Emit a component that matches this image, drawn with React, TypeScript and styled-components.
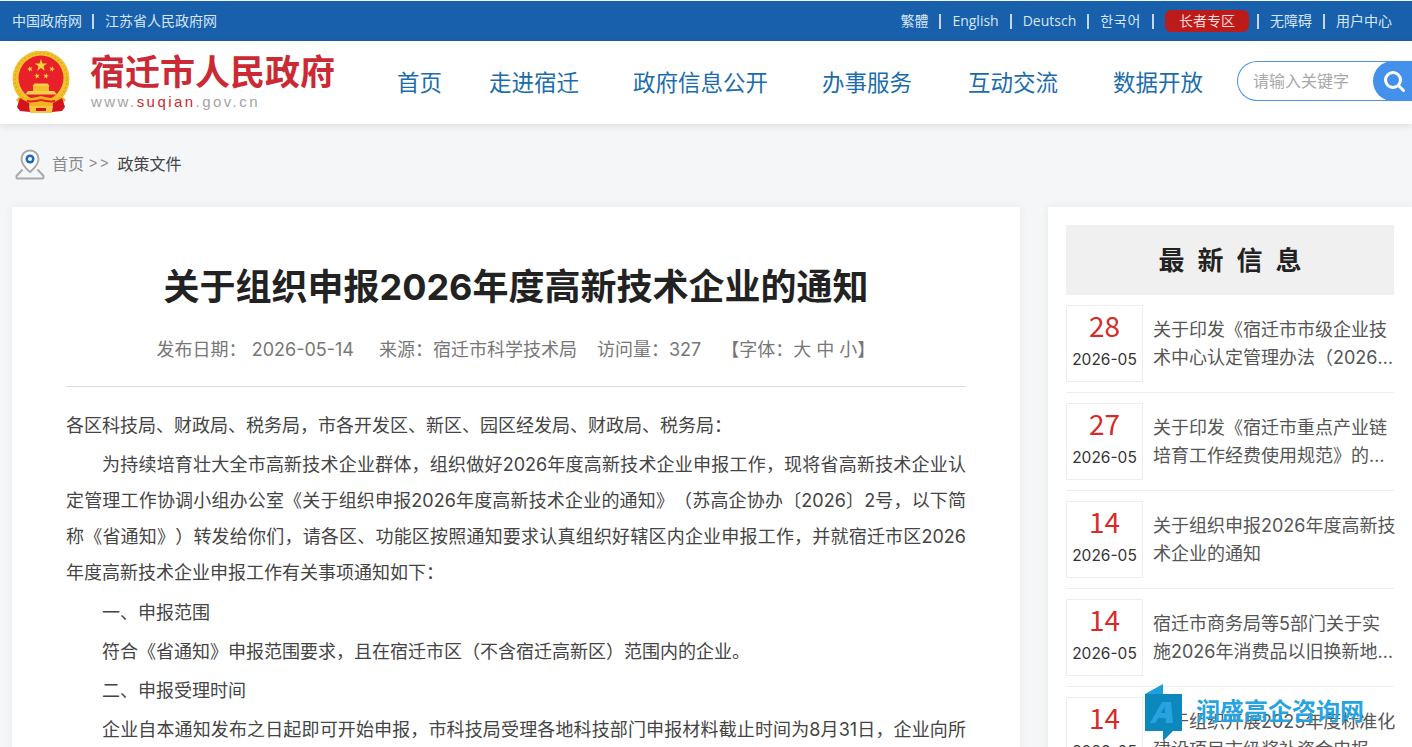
import React, { FC } from "react";
import styled, { createGlobalStyle } from "styled-components";

const FONT = `Inter, "Noto Sans CJK SC", "Noto Sans", sans-serif`;
const CJK = `"Noto Sans CJK SC", "Noto Sans", sans-serif`;

const GlobalStyle = createGlobalStyle`
  html, body {
    margin: 0;
    height: 100%;
    overflow: hidden;
    background: #f5f6f8;
    font-family: ${FONT};
    text-spacing-trim: space-all;
  }
  * { box-sizing: border-box; }
`;

const navItems = [
  { name: "首页", gap: 0 },
  { name: "走进宿迁", gap: 47 },
  { name: "政府信息公开", gap: 54 },
  { name: "办事服务", gap: 54 },
  { name: "互动交流", gap: 56 },
  { name: "数据开放", gap: 55 },
];

const news = [
  { day: "28", text: "关于印发《宿迁市市级企业技术中心认定管理办法（2026年修订）》的通知" },
  { day: "27", text: "关于印发《宿迁市重点产业链培育工作经费使用规范》的通知" },
  { day: "14", text: "关于组织申报2026年度高新技术企业的通知" },
  { day: "14", text: "宿迁市商务局等5部门关于实施2026年消费品以旧换新地方补贴政策的通知" },
  { day: "14", text: "关于组织开展2025年度标准化建设项目市级奖补资金申报工作的通知" },
];

const Page = styled.div`
  height: 747px;
  overflow: hidden;
  position: relative;
`;

const TopBar = styled.div`
  height: 40px;
  margin-top: 1px;
  padding: 0 20px 0 12px;
  background: #1860ab;
  color: #d6e6f5;
  display: flex;
  align-items: center;
  justify-content: space-between;
`;

const TopGroup = styled.div`
  display: flex;
  align-items: center;
`;

const TopLink = styled.span<{ $tracked?: boolean }>`
  font-family: "Open Sans", ${CJK};
  font-size: 14px;
  line-height: 20px;
  letter-spacing: ${(p) => (p.$tracked ? 0.7 : 0)}px;
  white-space: nowrap;
`;

const Sep = styled.i<{ $left?: boolean }>`
  width: 2px;
  height: 15px;
  margin: ${(p) => (p.$left ? "0 11px 0 10px" : "0 11px")};
  background: #c3d8ee;
`;

const Elder = styled.span`
  width: 84px;
  height: 22px;
  margin-right: -3px;
  border-radius: 6px;
  background: #bd1a1a;
  color: #f6dcdc;
  font-size: 14px;
  line-height: 22px;
  text-align: center;
`;

const Header = styled.header`
  position: relative;
  height: 83px;
  padding-bottom: 3px;
  background: #fff;
  box-shadow: 0 2px 8px rgba(0, 0, 0, 0.1);
  display: flex;
  align-items: center;
`;

const Brand = styled.div`
  width: 397px;
  padding-left: 12px;
  display: flex;
  align-items: center;
  gap: 20px;
  flex: none;
`;

const EmblemSvg = styled.svg`
  flex: none;
  margin-top: 3px;
`;

const BrandText = styled.div`
  display: flex;
  flex-direction: column;
  margin-top: -1px;
`;

const BrandName = styled.div`
  color: #cb2a34;
  font-size: 35px;
  line-height: 40px;
  font-weight: 700;
  white-space: nowrap;
`;

const BrandUrl = styled.div`
  color: #a3a3a3;
  font-family: "Liberation Sans", sans-serif;
  font-size: 15px;
  line-height: 16px;
  letter-spacing: 2.45px;
  margin: 2px 0 0 1px;

  span {
    color: #cb2a34;
  }
`;

const Nav = styled.nav`
  display: flex;
  margin-top: 4px;
`;

const NavItem = styled.a<{ $gap: number }>`
  margin-left: ${(p) => p.$gap}px;
  color: #1b6cab;
  font-size: 22.5px;
  line-height: 34px;
  white-space: nowrap;
`;

const Search = styled.div`
  margin-left: auto;
  width: 175px;
  height: 40px;
  border: 1px solid #4c93e6;
  border-right: 0;
  border-radius: 20px 0 0 20px;
  display: flex;
  align-items: center;
  padding: 0 0 2px 15px;
  position: relative;
  color: #a8a8a8;
  font-size: 16px;
  white-space: nowrap;
  flex: none;
`;

const SearchButton = styled.div`
  position: absolute;
  top: -1px;
  right: 0;
  width: 39px;
  height: 40px;
  padding-left: 2px;
  border-radius: 20px 0 0 20px;
  background: #4491eb;
  display: flex;
  align-items: center;
  justify-content: center;
`;

const Crumbs = styled.div`
  height: 83px;
  padding: 0 0 5px 15px;
  display: flex;
  align-items: center;
  font-size: 16px;
  color: #8a8a8a;
`;

const Pin = styled.svg`
  flex: none;
  margin: 3px 7px 0 0;
`;

const CrumbArrow = styled.span`
  margin: 0 6px 0 5px;
  font-family: "Liberation Sans", sans-serif;
  letter-spacing: 3px;
  font-size: 14px;
`;

const CrumbCurrent = styled.span`
  color: #444;
`;

const Columns = styled.div`
  display: flex;
  padding-left: 12px;
  gap: 28px;
`;

const Article = styled.main`
  flex: none;
  width: 1008px;
  height: 800px;
  padding: 0 54px;
  background: #fff;
  box-shadow: 0 0 10px rgba(0, 0, 0, 0.06);
`;

const Title = styled.h1`
  margin: 0;
  padding-top: 54px;
  color: #222;
  font-size: 36px;
  line-height: 52px;
  font-weight: 700;
  text-align: center;
  white-space: nowrap;
`;

const Meta = styled.div`
  margin-top: 22px;
  padding-bottom: 21px;
  border-bottom: 1px solid #ddd;
  display: flex;
  justify-content: center;
  color: #777;
  font-size: 18px;
  line-height: 30px;
  white-space: nowrap;
`;

const MetaItem = styled.span<{ $gap: number }>`
  margin-right: ${(p) => p.$gap}px;
`;

const Body = styled.div`
  margin-top: 21px;
`;

const Para = styled.p<{ $flush?: boolean }>`
  margin: 0 0 3.3px;
  color: #444;
  font-size: 18px;
  line-height: 36px;
  text-align: justify;
  text-indent: ${(p) => (p.$flush ? 0 : 36)}px;
`;

const Side = styled.aside`
  flex: none;
  width: 364px;
  padding: 18px 18px 0;
  background: #fff;
  box-shadow: 0 0 10px rgba(0, 0, 0, 0.06);
`;

const SideTitle = styled.div`
  height: 70px;
  padding-left: 13px;
  background: #f0f0f1;
  color: #222;
  font-size: 26px;
  font-weight: 700;
  letter-spacing: 13px;
  line-height: 72px;
  text-align: center;
`;

const NewsItem = styled.div`
  display: flex;
  gap: 10px;
  height: 98px;
  padding: 10px 0;
  border-bottom: 1px solid #eee;
`;

const DateBox = styled.div`
  flex: none;
  width: 77px;
  height: 77px;
  border: 1px solid #eee;
  display: flex;
  flex-direction: column;
  align-items: center;
`;

const Day = styled.div`
  color: #d52b2b;
  font-family: ${CJK};
  font-size: 28px;
  line-height: 38px;
`;

const Month = styled.div`
  margin-top: 4px;
  color: #333;
  font-size: 15.5px;
  line-height: 24px;
`;

const NewsText = styled.div`
  flex: none;
  width: 244px;
  height: 56px;
  margin-top: 11px;
  color: #555;
  font-size: 18px;
  line-height: 28px;
  overflow: hidden;
  display: -webkit-box;
  -webkit-box-orient: vertical;
  -webkit-line-clamp: 2;
`;

const Watermark = styled.div`
  position: absolute;
  left: 1145px;
  top: 684px;
  height: 58px;
`;

const WatermarkText = styled.span`
  position: absolute;
  left: 51px;
  top: 11px;
  color: #27a4e0;
  font-family: ${CJK};
  font-size: 24px;
  line-height: 30px;
  font-weight: 700;
  white-space: nowrap;
`;

// five-pointed star for the emblem
const starPoints = (cx: number, cy: number, r: number, turn = 0) =>
  Array.from({ length: 10 }, (_, i) => {
    const rad = i % 2 === 0 ? r : r * 0.4;
    const a = -Math.PI / 2 + (i * Math.PI) / 5 + turn;
    return `${(cx + rad * Math.cos(a)).toFixed(2)},${(cy + rad * Math.sin(a)).toFixed(2)}`;
  }).join(" ");

const Emblem: FC = () => (
  <EmblemSvg width="58" height="63" viewBox="0 0 58 63">
    <circle cx="29" cy="28" r="28.5" fill="#f0c22e" />
    <circle cx="29" cy="28" r="26" fill="none" stroke="#e3a91c" strokeWidth="1.5" strokeDasharray="2 2" />
    <circle cx="29" cy="27" r="22.5" fill="#e8202a" />
    <polygon points={starPoints(29, 14.5, 6.5)} fill="#f9d835" />
    <polygon points={starPoints(18, 18, 3, -0.3)} fill="#f9d835" />
    <polygon points={starPoints(40, 18, 3, 0.3)} fill="#f9d835" />
    <polygon points={starPoints(25, 25, 3, -0.2)} fill="#f9d835" />
    <polygon points={starPoints(34, 25, 3, 0.2)} fill="#f9d835" />
    <path d="M22.5 32.5h13l2 2.5h-17Z" fill="#f7cf4a" />
    <path d="M21 35h16v5H21Z" fill="#f3bd2f" />
    <path d="M16 40h26l3 3.5H13Z" fill="#f7cf4a" />
    <path d="M7 46c6 3 13 1 22-1 9 2 16 4 22 1l3 3-5 5-20 2-20-2-5-5Z" fill="#f2b320" />
    <path d="M15 49c4 1 9 0 14-1 5 1 10 2 14 1v2c-4 1-9 0-14-1-5 1-10 2-14 1Z" fill="#e8202a" />
    <path d="M8 47l9 5 1 9-10-1-3-4Z" fill="#d3141c" />
    <path d="M50 47l-9 5-1 9 10-1 3-4Z" fill="#d3141c" />
    <path d="M18 55h22v7H18Z" fill="#f5c53a" />
    <path d="M24 57h10v3H24Z" fill="#d3141c" />
  </EmblemSvg>
);

const PinIcon: FC = () => (
  <Pin width="30" height="31" viewBox="0 0 30 31">
    <path d="M15 1.5c-5 0-8.5 3.8-8.5 8.4C6.5 15.5 15 23 15 23s8.5-7.5 8.5-13.1C23.5 5.3 20 1.5 15 1.5Z" fill="#fff" stroke="#a9a9a9" strokeWidth="2" />
    <circle cx="15" cy="10" r="4.5" fill="#1a67b5" />
    <circle cx="15" cy="10" r="2" fill="#fff" />
    <path d="M7.5 20.5 1.5 27v1.5a1 1 0 0 0 1 1h25a1 1 0 0 0 1-1V27l-6-6.5" fill="none" stroke="#a9a9a9" strokeWidth="2" strokeLinejoin="round" />
  </Pin>
);

const WatermarkLogo: FC = () => (
  <svg width="38" height="58" viewBox="0 0 38 58">
    <path d="M0 10 18 0v10Z" fill="#1ba0dc" />
    <path d="M0 10h37v37H28L18 57V47H0Z" fill="#0d88bd" />
    <path d="M5 39 17 18h9l2 21h-7l-.4-5h-7.5l-2.6 5ZM16 29h4.2l-.6-6.5Z" fill="#27a4e0" />
  </svg>
);

const App: FC = () => (
  <Page>
    <GlobalStyle />
    <TopBar>
      <TopGroup>
        <TopLink>中国政府网</TopLink>
        <Sep $left />
        <TopLink>江苏省人民政府网</TopLink>
      </TopGroup>
      <TopGroup>
        <TopLink>繁體</TopLink>
        <Sep />
        <TopLink>English</TopLink>
        <Sep />
        <TopLink>Deutsch</TopLink>
        <Sep />
        <TopLink $tracked>한국어</TopLink>
        <Sep />
        <Elder>长者专区</Elder>
        <Sep />
        <TopLink>无障碍</TopLink>
        <Sep />
        <TopLink>用户中心</TopLink>
      </TopGroup>
    </TopBar>
    <Header>
      <Brand>
        <Emblem />
        <BrandText>
          <BrandName>宿迁市人民政府</BrandName>
          <BrandUrl>
            www.<span>suqian</span>.gov.cn
          </BrandUrl>
        </BrandText>
      </Brand>
      <Nav>
        {navItems.map((item) => (
          <NavItem key={item.name} $gap={item.gap}>
            {item.name}
          </NavItem>
        ))}
      </Nav>
      <Search>
        请输入关键字
        <SearchButton>
          <svg width="24" height="24" viewBox="0 0 24 24" fill="none" stroke="#fff" strokeWidth="3">
            <circle cx="11" cy="11" r="7.5" />
            <path d="m16.5 16.5 5 5" strokeLinecap="round" />
          </svg>
        </SearchButton>
      </Search>
    </Header>
    <Crumbs>
      <PinIcon />
      首页
      <CrumbArrow>&gt;&gt;</CrumbArrow>
      <CrumbCurrent>政策文件</CrumbCurrent>
    </Crumbs>
    <Columns>
      <Article>
        <Title>关于组织申报2026年度高新技术企业的通知</Title>
        <Meta>
          <MetaItem $gap={25}>发布日期：&nbsp;2026-05-14</MetaItem>
          <MetaItem $gap={20}>来源：宿迁市科学技术局</MetaItem>
          <MetaItem $gap={20}>访问量：327</MetaItem>
          <span>【字体：大 中 小】</span>
        </Meta>
        <Body>
          <Para $flush>各区科技局、财政局、税务局，市各开发区、新区、园区经发局、财政局、税务局：</Para>
          <Para>
            为持续培育壮大全市高新技术企业群体，组织做好2026年度高新技术企业申报工作，现将省高新技术企业认定管理工作协调小组办公室《关于组织申报2026年度高新技术企业的通知》（苏高企协办〔2026〕2号，以下简称《省通知》）转发给你们，请各区、功能区按照通知要求认真组织好辖区内企业申报工作，并就宿迁市区2026年度高新技术企业申报工作有关事项通知如下：
          </Para>
          <Para>一、申报范围</Para>
          <Para>符合《省通知》申报范围要求，且在宿迁市区（不含宿迁高新区）范围内的企业。</Para>
          <Para>二、申报受理时间</Para>
          <Para>
            企业自本通知发布之日起即可开始申报，市科技局受理各地科技部门申报材料截止时间为8月31日，企业向所在地科技部门提交申报材料的时间由各地自行确定。
          </Para>
        </Body>
      </Article>
      <Side>
        <SideTitle>最新信息</SideTitle>
        {news.map((item, i) => (
          <NewsItem key={i}>
            <DateBox>
              <Day>{item.day}</Day>
              <Month>2026-05</Month>
            </DateBox>
            <NewsText>{item.text}</NewsText>
          </NewsItem>
        ))}
      </Side>
    </Columns>
    <Watermark>
      <WatermarkLogo />
      <WatermarkText>润盛高企咨询网</WatermarkText>
    </Watermark>
  </Page>
);

export default App;
